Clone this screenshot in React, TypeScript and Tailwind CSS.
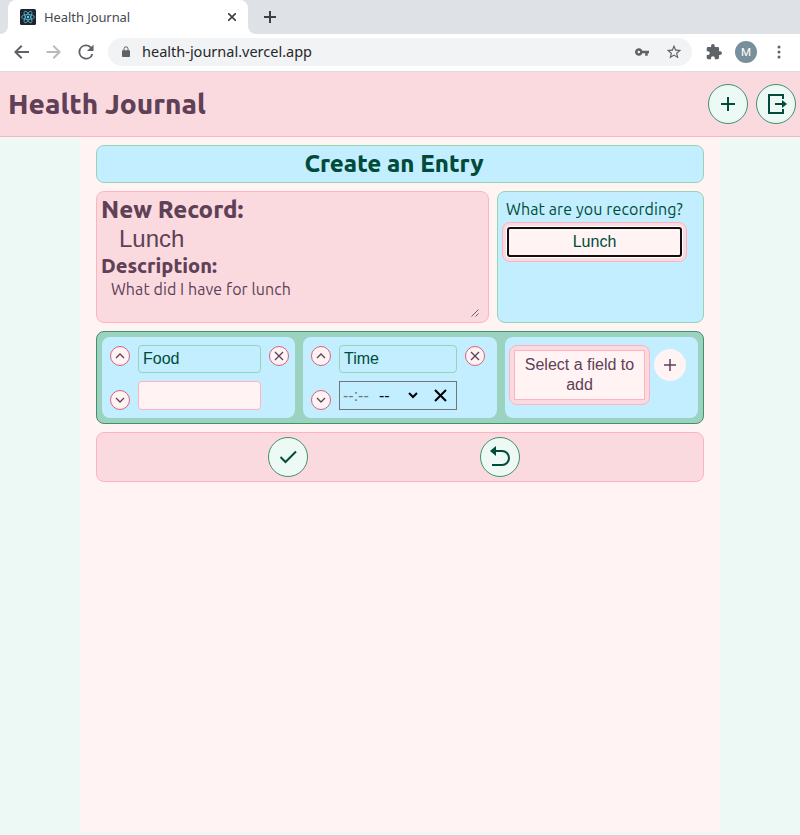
import React from "react";

const ubuntu = "font-['Ubuntu','Noto_Sans',sans-serif]";
const arial = "font-['Liberation_Sans',Arial,sans-serif]";

function Round({ children }: { children: React.ReactNode }) {
  return (
    <button className="flex size-10 shrink-0 items-center justify-center rounded-full border border-[#40916c] bg-[#edf9f5] text-[#004b39]">
      {children}
    </button>
  );
}

function Small({ d }: { d: string }) {
  return (
    <button className="flex size-5 shrink-0 items-center justify-center rounded-full border border-[#d8607c] bg-[#fff3f4] text-[#5f4056]">
      <svg width="18" height="18" viewBox="0 0 18 18" fill="none" stroke="currentColor" strokeWidth="1.3" className="shrink-0">
        <path d={d} />
      </svg>
    </button>
  );
}

const UP = "M5 11l4-4 4 4";
const DOWN = "M5 7l4 4 4-4";
const CROSS = "M5 5l8 8M13 5l-8 8";

function TabBar() {
  return (
    <div className="flex h-[34px] bg-[#dee1e6]">
      <div className="flex w-2 bg-white">
        <div className="w-2 rounded-br-lg bg-[#dee1e6]" />
      </div>
      <div className="flex w-60 items-center rounded-t-lg bg-white pl-3 text-[#45494d]">
        <svg width="16" height="16" viewBox="0 0 16 16" fill="none" stroke="#53b9d6" strokeWidth="0.8">
          <rect width="16" height="16" rx="1.5" fill="#20232a" stroke="none" />
          <ellipse cx="8" cy="8" rx="6.5" ry="2.5" />
          <ellipse cx="8" cy="8" rx="6.5" ry="2.5" transform="rotate(60 8 8)" />
          <ellipse cx="8" cy="8" rx="6.5" ry="2.5" transform="rotate(120 8 8)" />
          <circle cx="8" cy="8" r="1.2" fill="#61dafb" stroke="none" />
        </svg>
        <span className="ml-2 flex-1 text-[13px] leading-4 tracking-[-0.08px]">Health Journal</span>
        <svg className="mr-3" width="8" height="8" viewBox="0 0 8 8" stroke="#3c4043" strokeWidth="1.6">
          <path d="M0 0l8 8M8 0l-8 8" />
        </svg>
      </div>
      <div className="flex w-2 bg-white">
        <div className="w-2 rounded-bl-lg bg-[#dee1e6]" />
      </div>
      <svg className="ml-2 mt-[11px]" width="12" height="12" viewBox="0 0 12 12" stroke="#3c4043" strokeWidth="2">
        <path d="M6 0v12M0 6h12" />
      </svg>
    </div>
  );
}

function Toolbar() {
  return (
    <div className="flex h-[38px] items-center border-b border-[#dadce0] bg-white pb-px pl-[14px] text-[#5f6368]">
      <svg width="16" height="16" viewBox="4 4 16 16" fill="currentColor">
        <path d="M19 11H7.83l4.59-4.59L11 5l-7 7 7 7 1.41-1.41L7.83 13H19v-2z" />
      </svg>
      <svg className="ml-4" width="16" height="16" viewBox="4 4 16 16" fill="#bababa">
        <path d="M12 5l-1.41 1.41L15.17 11H4.500v2h10.670l-4.580 4.590L12 19l7-7z" />
      </svg>
      <svg className="ml-4" width="16" height="16" viewBox="3.500 3.500 17 17" fill="currentColor">
        <path d="M17.65 6.35A7.96 7.96 0 0 0 12 4a8 8 0 1 0 7.73 10h-2.08A6 6 0 1 1 12 6c1.66 0 3.14.69 4.22 1.78L13 11h7V4l-2.35 2.35z" />
      </svg>
      <div className="ml-[14px] flex h-7 w-[584px] items-center rounded-full bg-[#f1f3f4] pl-[14px]">
        <svg width="8" height="12" viewBox="0 0 8 12">
          <path d="M2 5V2.8a2 2 0 0 1 4 0V5" fill="none" stroke="currentColor" strokeWidth="1" />
          <rect y="4.2" width="8" height="6.8" rx="0.8" fill="currentColor" />
        </svg>
        <span className="ml-3 flex-1 pb-0.5 text-[14.500px] leading-5 text-[#26282b]">health-journal.vercel.app</span>
        <svg width="14" height="8" viewBox="1 6 22 12" fill="currentColor">
          <path d="M12.65 10A6 6 0 1 0 12.65 14H17v4h4v-4h2v-4H12.65zM7 14a2 2 0 1 1 0-4 2 2 0 0 1 0 4z" />
        </svg>
        <svg className="ml-[17px] mr-[10px]" width="16" height="16" viewBox="1 1 22 22" fill="currentColor">
          <path d="M22 9.24l-7.19-.62L12 2 9.19 8.63 2 9.24l5.46 4.73L5.82 21 12 17.27 18.18 21l-1.63-7.03L22 9.24zM12 15.4l-3.76 2.27 1-4.28-3.32-2.88 4.38-.38L12 6.1l1.71 4.04 4.38.38-3.32 2.88 1 4.28L12 15.4z" />
        </svg>
      </div>
      <svg className="ml-[14px]" width="16" height="16" viewBox="1 1 22 22" fill="currentColor">
        <path d="M20.5 11H19V7a2 2 0 0 0-2-2h-4V3.500a2.500 2.500 0 0 0-5 0V5H4a2 2 0 0 0-2 2v3.800h1.500a2.700 2.700 0 0 1 0 5.400H2V20a2 2 0 0 0 2 2h3.800v-1.500a2.700 2.700 0 0 1 5.400 0V22H17a2 2 0 0 0 2-2v-4h1.500a2.500 2.500 0 0 0 0-5z" />
      </svg>
      <div className="ml-[13px] flex size-[22px] items-center justify-center rounded-full bg-[#78909c] pt-px font-['Roboto',sans-serif] text-[11.500px] leading-none text-white">M</div>
      <svg className="ml-[19.500px]" width="4" height="14" viewBox="0 0 4 14" fill="currentColor">
        <circle cx="2" cy="2" r="1.5" />
        <circle cx="2" cy="7" r="1.5" />
        <circle cx="2" cy="12" r="1.5" />
      </svg>
    </div>
  );
}

export default function App() {
  return (
    <div className="flex h-[835px] w-[800px] flex-col overflow-hidden bg-[#edf9f5] pb-[3px] font-['Noto_Sans',sans-serif]">
      <TabBar />
      <Toolbar />
      <header className={`flex h-[65px] items-center border-b border-[#ffb3c1] bg-[#fadadf] pl-2 pr-1 text-[#5f4056] ${ubuntu}`}>
        <h1 className="flex-1 text-[28px] font-extrabold leading-8">Health Journal</h1>
        <div className="flex gap-2">
          <Round>
            <svg width="24" height="24" viewBox="0 0 24 24" fill="none" stroke="currentColor" strokeWidth="2">
              <path d="M12 5v14M5 12h14" />
            </svg>
          </Round>
          <Round>
            <svg width="24" height="24" viewBox="0 0 24 24" fill="none" stroke="currentColor" strokeWidth="2">
              <path d="M19 7V3H5v18h14v-4M11 12h8" />
              <path d="M18 8l5 4-5 4z" fill="currentColor" stroke="none" />
            </svg>
          </Round>
        </div>
      </header>

      <main className="mx-auto flex w-[640px] flex-1 flex-col gap-2 bg-[#fff3f4] px-4 pt-2">
        <div className={`flex h-[38px] items-center justify-center rounded-lg border border-[#95d5b2] bg-[#c2eeff] pr-3 text-[#004b39] ${ubuntu}`}>
          <h2 className="text-[24px] font-extrabold leading-8">Create an Entry</h2>
        </div>

        <div className="flex h-[132px] gap-2">
          <section className={`relative w-[393px] rounded-lg border border-[#ffb3c1] bg-[#fadadf] pl-1 text-[#5f4056] ${ubuntu}`}>
            <h2 className="pt-1 text-[24px] font-extrabold leading-7">New Record:</h2>
            <div className={`pl-[18px] pt-px text-[24px] leading-7 ${arial}`}>Lunch</div>
            <h3 className="text-[20px] font-extrabold leading-[25px]">Description:</h3>
            <p className="pl-[10px] pt-px text-[16px] leading-5 tracking-[0.08px]">What did I have for lunch</p>
            <svg className="absolute bottom-[5px] right-[9px]" width="8" height="8" viewBox="0 0 8 8" stroke="#555" strokeWidth="0.9">
              <path d="M0.500 7.500l7-7M4.500 7.500l3-3" />
            </svg>
          </section>
          <section className="w-[207px] rounded-lg border border-[#95d5b2] bg-[#c2eeff] pl-1 pt-[7px] text-[#004b39]">
            <p className={`pl-1 text-[16px] leading-5 tracking-[0.12px] ${ubuntu}`}>What are you recording?</p>
            <div className="mt-[3px] h-10 w-[185px] rounded-lg border border-[#ffb3c1] bg-[#fadadf] p-[3px]">
              <div className="h-full rounded bg-white p-px">
                <div className={`flex h-full items-center justify-center rounded-[3px] border-2 border-[#101010] bg-[#fff3f4] text-[16px] ${arial}`}>Lunch</div>
              </div>
            </div>
          </section>
        </div>

        <section className={`flex h-[93px] gap-2 rounded-lg border border-[#40916c] bg-[#9bd3c0] p-[5px] ${arial}`}>
          <div className="flex w-[193px] gap-2 rounded-lg bg-[#c2eeff] pl-2 pt-2">
            <div className="flex flex-col gap-6 pt-px">
              <Small d={UP} />
              <Small d={DOWN} />
            </div>
            <div className="flex w-[123px] shrink-0 flex-col gap-2 text-[16px] text-[#004b39]">
              <div className="flex h-7 items-center rounded border border-[#95d5b2] pl-1">Food</div>
              <div className="h-[29px] rounded border border-[#ffb3c1] bg-[#fff3f4]" />
            </div>
            <div className="pt-px"><Small d={CROSS} /></div>
          </div>
          <div className="flex w-[194px] gap-2 rounded-lg bg-[#c2eeff] px-2 pt-2">
            <div className="flex flex-col gap-6 pt-px">
              <Small d={UP} />
              <Small d={DOWN} />
            </div>
            <div className="flex w-[118px] flex-col gap-2 text-[16px] text-[#004b39]">
              <div className="flex h-7 items-center rounded border border-[#95d5b2] pl-1">Time</div>
              <div className="flex h-[29px] items-center border border-[#767676] pl-[3px] text-black">
                <span className="w-[36px] text-[#757575]">--:--</span>
                <span>--</span>
                <svg className="ml-[18px]" width="10" height="7" viewBox="0 0 10 7" fill="none" stroke="black" strokeWidth="2">
                  <path d="M1 1l4 4 4-4" />
                </svg>
                <svg className="ml-4" width="13" height="13" viewBox="0 0 13 13" stroke="black" strokeWidth="2">
                  <path d="M1 1l11 11M12 1L1 12" />
                </svg>
              </div>
            </div>
            <div className="pt-px"><Small d={CROSS} /></div>
          </div>
          <div className="flex w-[193px] items-start gap-1 rounded-lg bg-[#c2eeff] pl-1 pt-2 text-[#5f4056]">
            <div className="h-[60px] w-[141px] rounded-lg border border-[#ffb3c1] bg-[#fadadf] p-1">
              <div className="h-full border border-[#ffb3c1] bg-[#fff3f4] pt-1 text-center text-[16px] leading-5">
                Select a field to<br />add
              </div>
            </div>
            <button className="mt-1 flex size-8 items-center justify-center rounded-full bg-[#fff3f4]">
              <svg width="12" height="12" viewBox="0 0 12 12" stroke="currentColor" strokeWidth="1.5">
                <path d="M6 0v12M0 6h12" />
              </svg>
            </button>
          </div>
        </section>

        <section className="flex h-[50px] items-center gap-[172px] rounded-lg border border-[#ffb3c1] bg-[#fadadf] pl-[171px]">
          <Round>
            <svg width="24" height="24" viewBox="0 0 24 24" fill="none" stroke="currentColor" strokeWidth="2">
              <path d="M4.500 12l5 5L20 6.500" />
            </svg>
          </Round>
          <Round>
            <svg width="24" height="24" viewBox="0 0 24 24" fill="none" stroke="currentColor" strokeWidth="2">
              <path d="M6 6h8a7 7 0 0 1 0 14H4" />
              <path d="M8 1v10L2 6z" fill="currentColor" stroke="none" />
            </svg>
          </Round>
        </section>
      </main>
    </div>
  );
}
